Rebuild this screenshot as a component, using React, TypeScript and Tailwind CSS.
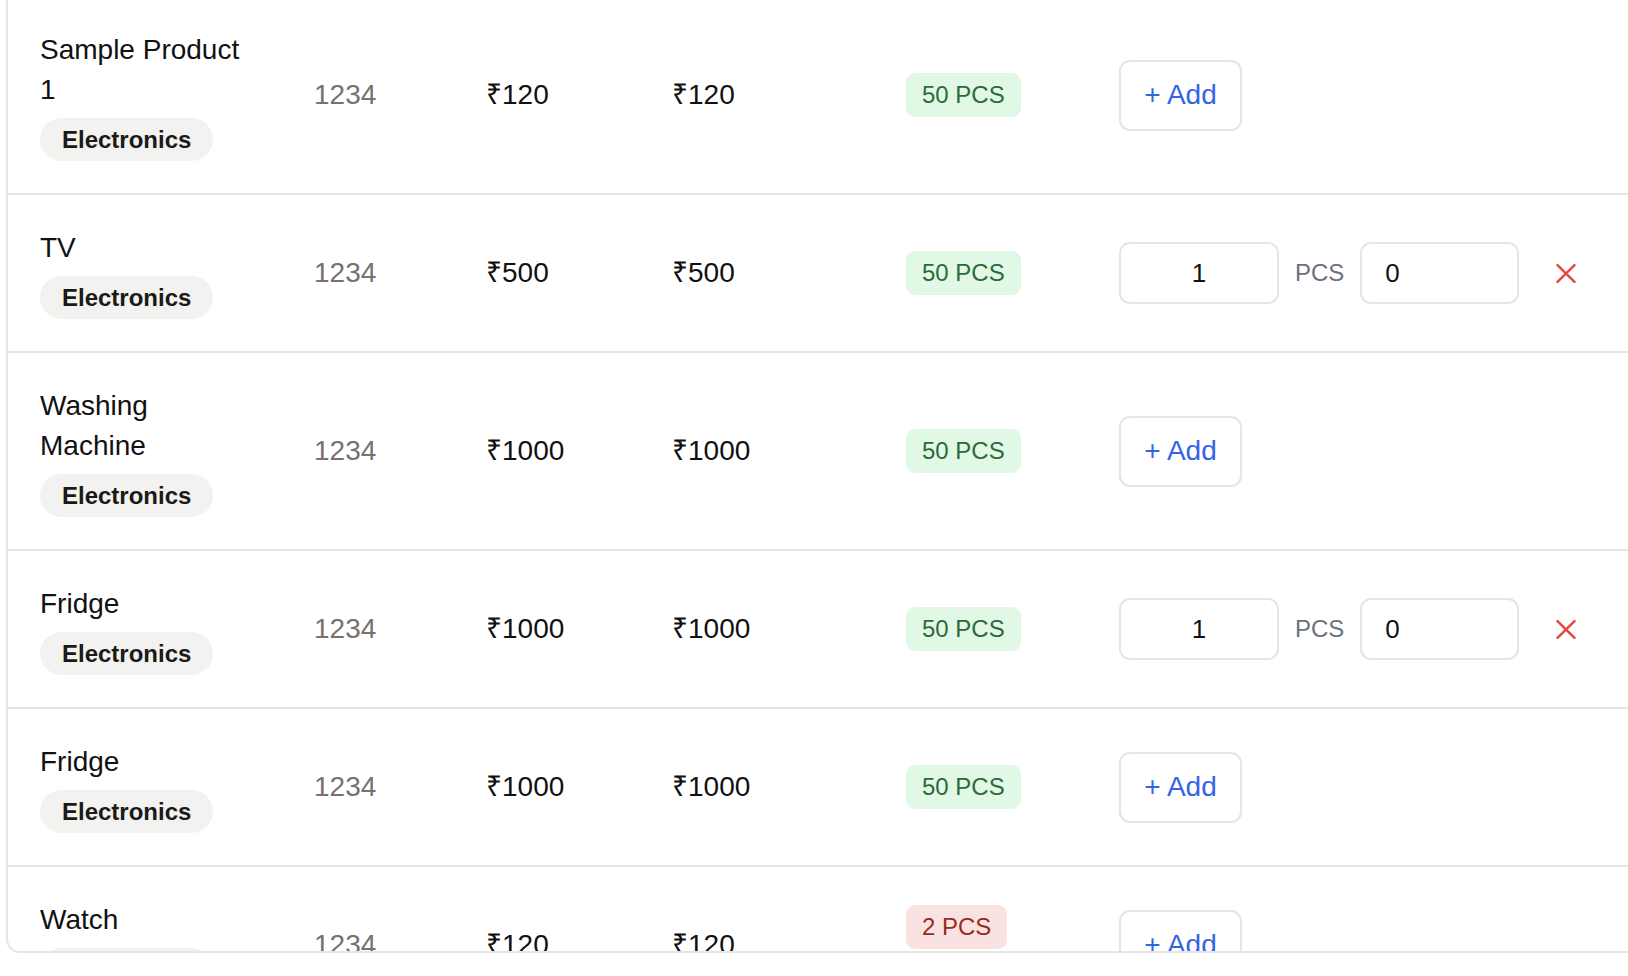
import React from "react";

type Product = {
  id: number;
  name: string;
  code: string;
  price: string;
  mrp: string;
  stock: string;
  lowStock?: boolean;
  qty?: { count: string; free: string };
};

const products: Product[] = [
  { id: 1, name: "Sample Product 1", code: "1234", price: "₹120", mrp: "₹120", stock: "50 PCS" },
  { id: 2, name: "TV", code: "1234", price: "₹500", mrp: "₹500", stock: "50 PCS", qty: { count: "1", free: "0" } },
  { id: 3, name: "Washing Machine", code: "1234", price: "₹1000", mrp: "₹1000", stock: "50 PCS" },
  { id: 4, name: "Fridge", code: "1234", price: "₹1000", mrp: "₹1000", stock: "50 PCS", qty: { count: "1", free: "0" } },
  { id: 5, name: "Fridge", code: "1234", price: "₹1000", mrp: "₹1000", stock: "50 PCS" },
  { id: 6, name: "Watch", code: "1234", price: "₹120", mrp: "₹120", stock: "2 PCS", lowStock: true },
];

function RemoveIcon() {
  return (
    <svg width="20" height="19" viewBox="0 0 20 19" fill="none" aria-hidden>
      <path d="M1.5 1.2 18.5 17.8M18.5 1.2 1.5 17.8" stroke="#e0473d" strokeWidth={2.4} strokeLinecap="round" />
    </svg>
  );
}

function StockBadge({ label, low }: { label: string; low?: boolean }) {
  return (
    <div className="flex flex-col">
      <span
        className={`inline-flex h-[44px] items-center self-start rounded-[9px] px-4 text-[24px] ${
          low ? "bg-[#f9e3e2] text-[#9a2a20]" : "bg-[#e1f8e6] text-[#2d6a3a]"
        }`}
      >
        {label}
      </span>
      {low ? <div className="h-[36px]" aria-hidden /> : null}
    </div>
  );
}

function QtyControls({ count, free }: { count: string; free: string }) {
  return (
    <div className="flex items-center">
      <input
        readOnly
        value={count}
        className="h-[62px] w-[160px] rounded-[11px] border-2 border-[#e5e5e5] bg-white text-center text-[26px] text-[#111] outline-none"
      />
      <span className="mx-[16px] text-[24px] text-[#6b7280]">PCS</span>
      <input
        readOnly
        value={free}
        className="h-[62px] w-[159px] rounded-[11px] border-2 border-[#e5e5e5] bg-white pl-[23px] text-[26px] text-[#111] outline-none"
      />
      <button type="button" className="ml-[37px] flex items-center" aria-label="Remove">
        <RemoveIcon />
      </button>
    </div>
  );
}

export default function App() {
  return (
    <div className="h-screen w-full overflow-hidden bg-white pl-[6px] font-['Liberation_Sans','Noto_Sans',sans-serif] text-[#111]">
      <div className="-mt-[5px] h-[958px] w-[1700px] overflow-hidden rounded-b-[14px] border-2 border-[#e5e5e5]">
        {products.map((p) => (
          <div
            key={p.id}
            className="grid grid-cols-[274px_172px_186px_234px_213px_1fr] items-center border-b-2 border-[#e5e5e5]"
          >
            <div className="flex flex-col items-start pt-[33px] pb-[32px] pl-8 pr-10">
              <span className="text-[28px] leading-[40px]">{p.name}</span>
              <span className="mt-2 inline-flex h-[43px] items-center rounded-full bg-[#f2f2f0] px-[22px] text-[24px] font-bold text-[#1c1917]">
                Electronics
              </span>
            </div>
            <div className="pl-8 text-[28px] leading-[40px] text-[#78716c]">{p.code}</div>
            <div className="pl-8 text-[28px] leading-[40px]">{p.price}</div>
            <div className="pl-8 text-[28px] leading-[40px]">{p.mrp}</div>
            <div className="pl-8">
              <StockBadge label={p.stock} low={p.lowStock} />
            </div>
            <div className="pl-8">
              {p.qty ? (
                <QtyControls count={p.qty.count} free={p.qty.free} />
              ) : (
                <button
                  type="button"
                  className="flex h-[71px] w-[123px] items-center justify-center rounded-[11px] border-2 border-[#e5e5e5] bg-white text-[28px] text-[#3563e6]"
                >
                  + Add
                </button>
              )}
            </div>
          </div>
        ))}
      </div>
    </div>
  );
}
